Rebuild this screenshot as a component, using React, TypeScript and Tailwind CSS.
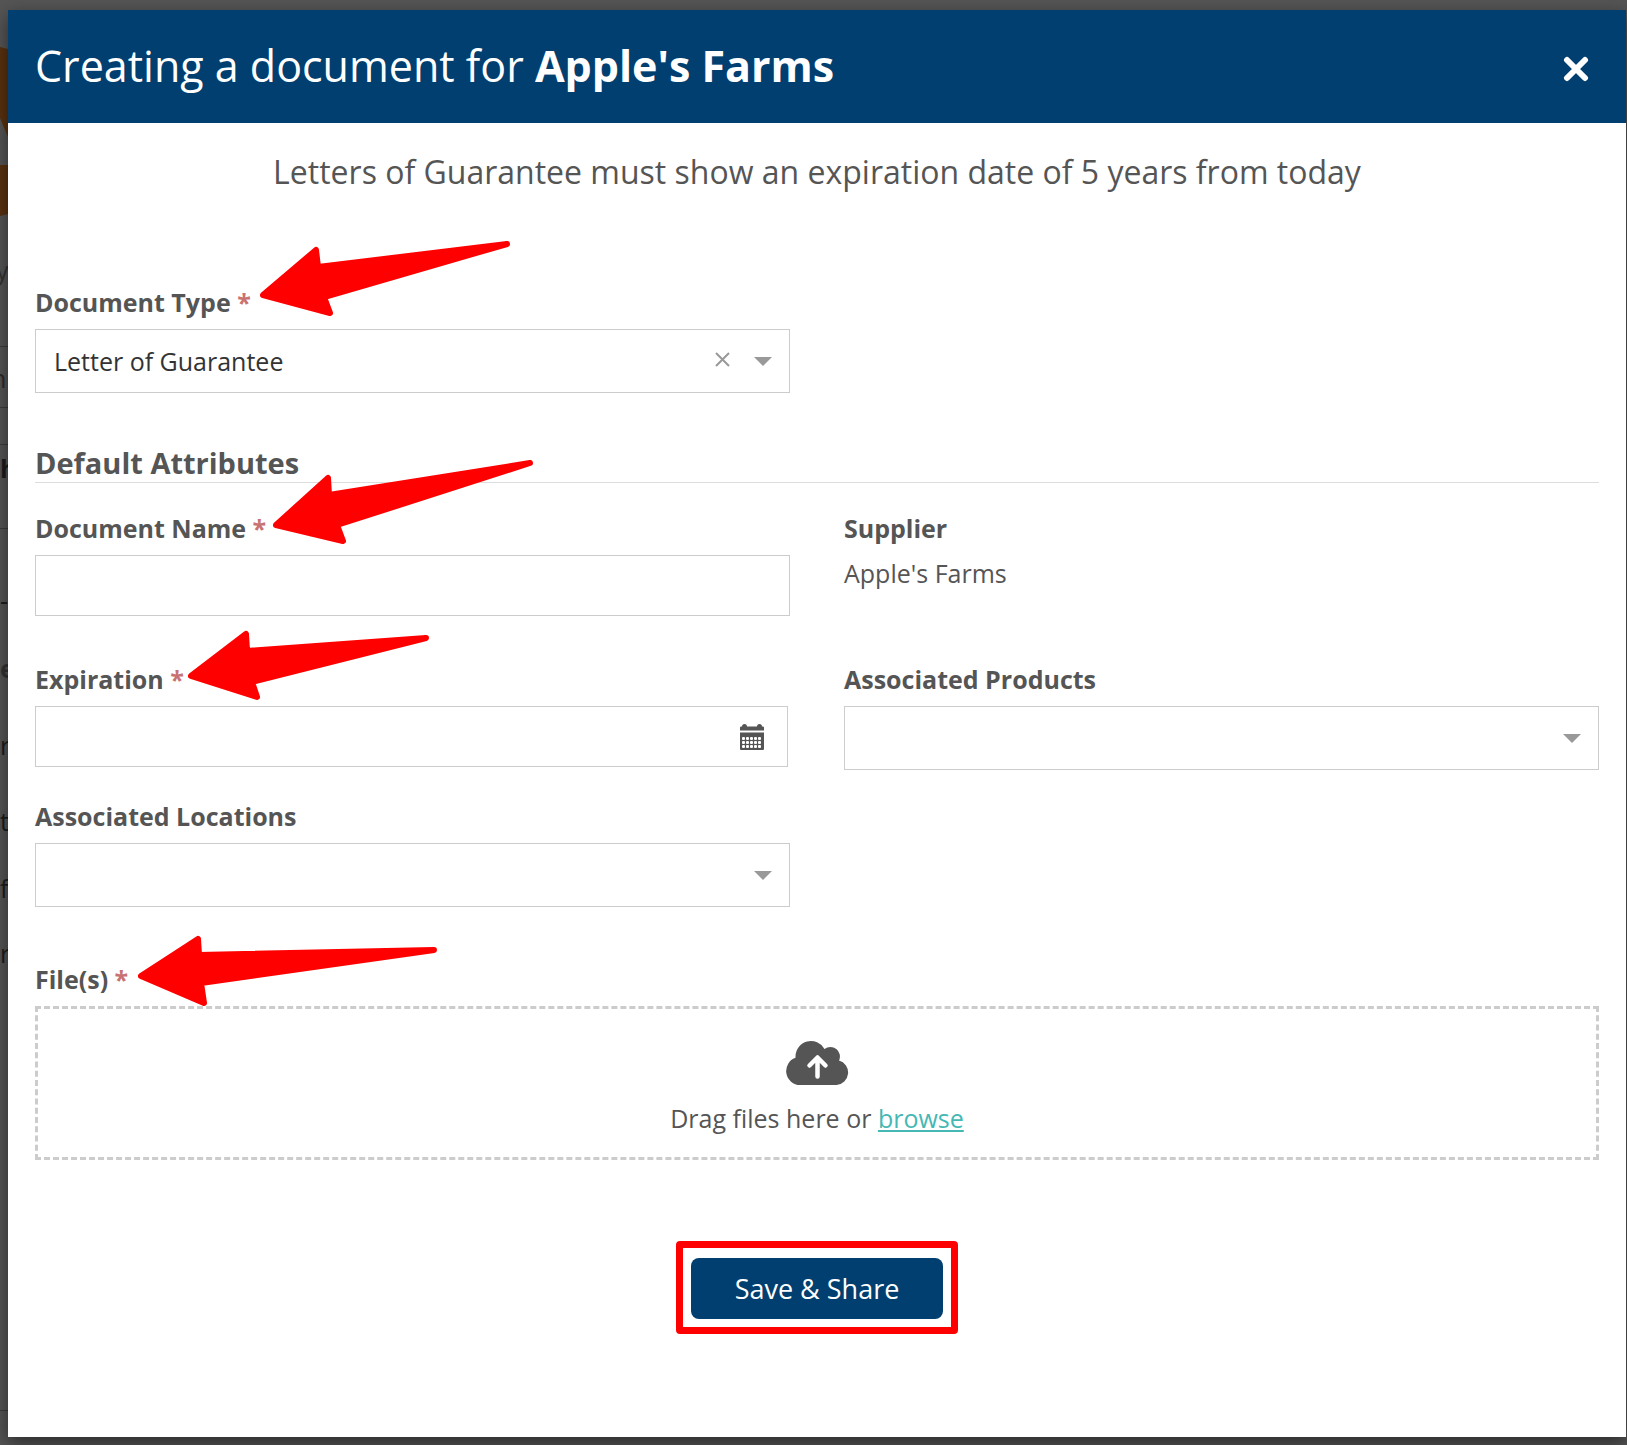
import React, { useState } from 'react';

type Point = [number, number];

// each arrow is drawn in its own box, tip on the left, tail on the right
const arrows: Record<string, { w: number; h: number; points: Point[] }> = {
  type: { w: 251, h: 76, points: [[3, 54], [56, 9], [58, 26], [247, 3], [64, 56], [70, 72]] },
  name: { w: 262, h: 84, points: [[3, 65], [55, 18], [56, 35], [257, 3], [64, 65], [70, 81]] },
  expiration: { w: 243, h: 71, points: [[3, 47], [58, 5], [59, 22], [238, 9], [64, 53], [69, 68]] },
  files: { w: 300, h: 72, points: [[3, 42], [60, 5], [61, 21], [296, 16], [63, 49], [66, 69]] },
};

function Arrow({ name, className }: { name: string; className: string }) {
  const { w, h, points } = arrows[name];
  return (
    <svg
      className={`absolute pointer-events-none ${className}`}
      width={w}
      height={h}
      viewBox={`0 0 ${w} ${h}`}
      aria-hidden="true"
    >
      <polygon
        points={points.map(p => p.join(',')).join(' ')}
        fill="#ff0000"
        stroke="#ff0000"
        strokeWidth="6"
        strokeLinejoin="round"
      />
    </svg>
  );
}

function Caret() {
  return (
    <svg className="mt-px" width="18" height="9" viewBox="0 0 18 9" aria-hidden="true">
      <path d="M0 0h18L9 9z" fill="#999" />
    </svg>
  );
}

function CalendarIcon() {
  return (
    <svg width="24" height="26" viewBox="0 0 24 26" aria-hidden="true">
      <path
        d="M0 6.500V3.500Q0 2.500 1 2.500h1Q2 0 4.500 0T7 2.500h10Q17 0 19.500 0T22 2.500h1Q24 2.500 24 3.500v3zM0 8.500h24V25q0 1-1 1H1Q0 26 0 25z"
        fill="#555"
      />
      {[13, 17, 21].map(y =>
        [2, 6, 10, 14, 18].map(x => (
          <rect key={`${x}-${y}`} x={x} y={y} width="3" height="3" rx="1" fill="#fff" />
        ))
      )}
    </svg>
  );
}

function CloudUploadIcon() {
  return (
    <svg width="63" height="44" viewBox="0 0 63 44" aria-hidden="true">
      <path
        d="M14 44A14 14 0 0 1 9.500 16.800V15.500A15.500 15.500 0 0 1 38.500 8A9.500 9.500 0 0 1 53 19.500A12.500 12.500 0 0 1 50.500 44z"
        fill="#555"
      />
      <path
        d="M31.500 35.500V18M23.500 24.500L31.500 16.500L39.500 24.500"
        fill="none"
        stroke="#fff"
        strokeWidth="4.500"
        strokeLinecap="round"
        strokeLinejoin="round"
      />
    </svg>
  );
}

function Label({ id, text, required, arrow, arrowClass }: {
  id?: string;
  text: string;
  required?: boolean;
  arrow?: string;
  arrowClass?: string;
}) {
  return (
    <div className="relative h-9">
      <label htmlFor={id} className="font-bold">
        {text}
        {required && <span className="text-[#c97272]"> *</span>}
      </label>
      {arrow && <Arrow name={arrow} className={arrowClass ?? ''} />}
    </div>
  );
}

function Select({ id, value, clearable }: { id: string; value?: string; clearable?: boolean }) {
  const [selected, setSelected] = useState(value ?? '');
  return (
    <div className="relative mt-2">
      <select
        id={id}
        value={selected}
        onChange={e => setSelected(e.target.value)}
        className="block w-full h-16 appearance-none border border-[#ccc] bg-white pl-[18px] pr-24 text-[#333] outline-none"
      >
        <option value="" />
        {value && <option value={value}>{value}</option>}
      </select>
      <div className="absolute inset-y-0 right-[18px] flex items-center gap-6 pointer-events-none">
        {clearable && (
          <button
            type="button"
            aria-label="Clear"
            onClick={() => setSelected('')}
            className="pointer-events-auto pb-1"
          >
            <svg width="15" height="15" viewBox="0 0 15 15" aria-hidden="true">
              <path d="M1 1l13 13M14 1L1 14" stroke="#999" strokeWidth="2" />
            </svg>
          </button>
        )}
        <Caret />
      </div>
    </div>
  );
}

// the dimmed page that stays visible around the dialog
const backdropText = [
  { text: 'y', className: 'top-[253px] -left-1 text-[#333]' },
  { text: 'n', className: 'top-[361px] -left-[9px] text-[#2b2b2b]' },
  { text: 'h', className: 'top-[451px] left-0 font-bold' },
  { text: '-', className: 'top-[583px] left-0' },
  { text: 'e', className: 'top-[651px] left-0 font-bold text-[#333]' },
  { text: 'r', className: 'top-[728px] left-0' },
  { text: 'ti', className: 'top-[804px] left-0' },
  { text: 'f', className: 'top-[871px] left-0' },
  { text: 'r', className: 'top-[936px] left-0' },
];

const backdropLines = ['top-[346px]', 'top-[407px]', 'top-[444px]', 'top-[528px]', 'top-[1410px]'];

function Backdrop() {
  return (
    <div className="absolute inset-y-0 left-0 w-6 text-[#1c1c1c]" aria-hidden="true">
      <svg className="absolute top-[47px] left-0" width="8" height="169" viewBox="0 0 8 169">
        <path d="M0 0l8 2v88L0 71zM0 118h8v49l-8 2z" fill="#5a3210" />
      </svg>
      {backdropLines.map(top => (
        <div key={top} className={`absolute inset-x-0 h-px bg-[#3c3c3c] ${top}`} />
      ))}
      {backdropText.map(({ text, className }) => (
        <span key={className} className={`absolute ${className}`}>
          {text}
        </span>
      ))}
    </div>
  );
}

function App() {
  const [name, setName] = useState('');
  const [expiration, setExpiration] = useState('');

  return (
    <div className="relative min-h-screen bg-[#555] pt-[10px] pb-2 pl-2 pr-px flex font-['Open_Sans','Noto_Sans',sans-serif] text-[25px] leading-[34px] text-[#555]">
      <Backdrop />
      <div role="dialog" aria-labelledby="dialog-title" className="relative flex-1 bg-white shadow-[0_6px_18px_rgba(0,0,0,0.5)]">
        <header className="flex items-center justify-between bg-[#003f70] pl-[27px] pr-[37px] h-[113px] text-white">
          <h1 id="dialog-title" className="pb-[2px] text-[43px] leading-[58px]">
            Creating a document for <b>Apple's Farms</b>
          </h1>
          <button type="button" aria-label="Close" className="pt-1">
            <svg width="26" height="26" viewBox="0 0 26 26" aria-hidden="true">
              <path d="M4 4l18 18M22 4L4 22" stroke="#fff" strokeWidth="6" strokeLinecap="round" />
            </svg>
          </button>
        </header>

        <form className="px-[27px] pb-24" onSubmit={e => e.preventDefault()}>
          <p className="pt-[27px] text-center text-[32px] leading-[44px]">
            Letters of Guarantee must show an expiration date of 5 years from today
          </p>

          <div className="mt-[91px] grid grid-cols-2 gap-x-[54px]">
            <div>
              <Label id="type" text="Document Type" required arrow="type" arrowClass="left-[225px] -top-[44px]" />
              <Select id="type" value="Letter of Guarantee" clearable />
            </div>
          </div>

          <h2 className="mt-[51px] border-b border-[#ddd] text-[29px] leading-[38px] font-bold">Default Attributes</h2>

          <div className="mt-7 grid grid-cols-2 gap-x-[54px]">
            <div>
              <Label id="name" text="Document Name" required arrow="name" arrowClass="left-[238px] -top-[51px]" />
              <input
                id="name"
                type="text"
                value={name}
                onChange={e => setName(e.target.value)}
                className="mt-2 block w-full h-[61px] border border-[#ccc] px-[18px] outline-none"
              />
            </div>
            <div>
              <Label text="Supplier" />
              <p className="mt-[9px]">Apple's Farms</p>
            </div>
            <div className="mt-[46px]">
              <Label id="expiration" text="Expiration" required arrow="expiration" arrowClass="left-[153px] -top-[33px]" />
              <div className="relative mt-2 mr-[2px]">
                <input
                  id="expiration"
                  type="text"
                  value={expiration}
                  onChange={e => setExpiration(e.target.value)}
                  className="block w-full h-[61px] border border-[#ccc] pl-[18px] pr-16 outline-none"
                />
                <button type="button" aria-label="Open calendar" className="absolute inset-y-0 right-6 flex items-center">
                  <CalendarIcon />
                </button>
              </div>
            </div>
            <div className="mt-[46px]">
              <Label id="products" text="Associated Products" />
              <Select id="products" />
            </div>
            <div className="mt-[29px]">
              <Label id="locations" text="Associated Locations" />
              <Select id="locations" />
            </div>
          </div>

          <div className="mt-[55px]">
            <Label id="files" text="File(s)" required arrow="files" arrowClass="left-[103px] -top-[28px]" />
            <div className="mt-2 flex flex-col items-center border-[3px] border-dashed border-[#ccc] pt-8 pb-[22px]">
              <CloudUploadIcon />
              <p className="mt-4">
                Drag files here or <a href="#files" className="text-[#45b8b4] underline">browse</a>
              </p>
              <input id="files" type="file" multiple className="sr-only" />
            </div>
          </div>

          <div className="mt-[81px] flex justify-center">
            <div className="rounded-[4px] border-[7px] border-[#ff0000] px-2 pt-[10px] pb-2">
              <button type="submit" className="h-[61px] w-[252px] rounded-lg bg-[#003f70] text-[27px] text-white">
                Save &amp; Share
              </button>
            </div>
          </div>
        </form>
      </div>
    </div>
  );
}

export default App;
